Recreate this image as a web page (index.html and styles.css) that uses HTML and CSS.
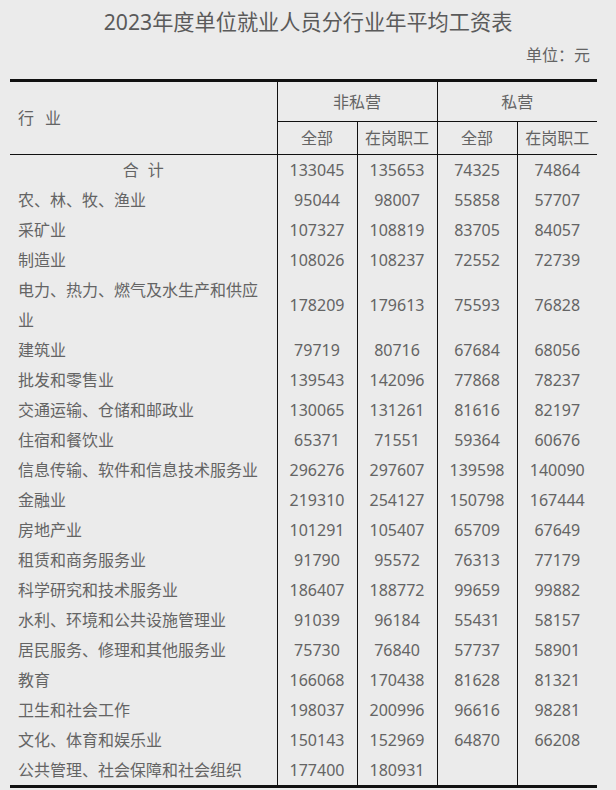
FILE: index.html
```html
<!DOCTYPE html>
<html lang="zh">
<head>
<meta charset="utf-8">
<title>2023年度单位就业人员分行业年平均工资表</title>
<link rel="stylesheet" href="styles.css">
</head>
<body>
<div class="page">
  <h1 class="title">2023年度单位就业人员分行业年平均工资表</h1>
  <div class="unit">单位：元</div>
  <table class="wage">
    <colgroup>
      <col class="c-ind"><col class="c-num"><col class="c-num"><col class="c-num"><col class="c-num">
    </colgroup>
    <thead>
      <tr class="h1">
        <th rowspan="2" class="ind-head">行业</th>
        <th colspan="2" class="grp vl">非私营</th>
        <th colspan="2" class="grp vl">私营</th>
      </tr>
      <tr class="h2">
        <th class="vl">全部</th>
        <th class="vl">在岗职工</th>
        <th class="vl">全部</th>
        <th class="vl">在岗职工</th>
      </tr>
    </thead>
    <tbody>
      <tr><td class="ind total">合计</td><td>133045</td><td>135653</td><td>74325</td><td>74864</td></tr>
      <tr><td class="ind">农、林、牧、渔业</td><td>95044</td><td>98007</td><td>55858</td><td>57707</td></tr>
      <tr><td class="ind">采矿业</td><td>107327</td><td>108819</td><td>83705</td><td>84057</td></tr>
      <tr><td class="ind">制造业</td><td>108026</td><td>108237</td><td>72552</td><td>72739</td></tr>
      <tr><td class="ind">电力、热力、燃气及水生产和供应业</td><td>178209</td><td>179613</td><td>75593</td><td>76828</td></tr>
      <tr><td class="ind">建筑业</td><td>79719</td><td>80716</td><td>67684</td><td>68056</td></tr>
      <tr><td class="ind">批发和零售业</td><td>139543</td><td>142096</td><td>77868</td><td>78237</td></tr>
      <tr><td class="ind">交通运输、仓储和邮政业</td><td>130065</td><td>131261</td><td>81616</td><td>82197</td></tr>
      <tr><td class="ind">住宿和餐饮业</td><td>65371</td><td>71551</td><td>59364</td><td>60676</td></tr>
      <tr><td class="ind">信息传输、软件和信息技术服务业</td><td>296276</td><td>297607</td><td>139598</td><td>140090</td></tr>
      <tr><td class="ind">金融业</td><td>219310</td><td>254127</td><td>150798</td><td>167444</td></tr>
      <tr><td class="ind">房地产业</td><td>101291</td><td>105407</td><td>65709</td><td>67649</td></tr>
      <tr><td class="ind">租赁和商务服务业</td><td>91790</td><td>95572</td><td>76313</td><td>77179</td></tr>
      <tr><td class="ind">科学研究和技术服务业</td><td>186407</td><td>188772</td><td>99659</td><td>99882</td></tr>
      <tr><td class="ind">水利、环境和公共设施管理业</td><td>91039</td><td>96184</td><td>55431</td><td>58157</td></tr>
      <tr><td class="ind">居民服务、修理和其他服务业</td><td>75730</td><td>76840</td><td>57737</td><td>58901</td></tr>
      <tr><td class="ind">教育</td><td>166068</td><td>170438</td><td>81628</td><td>81321</td></tr>
      <tr><td class="ind">卫生和社会工作</td><td>198037</td><td>200996</td><td>96616</td><td>98281</td></tr>
      <tr><td class="ind">文化、体育和娱乐业</td><td>150143</td><td>152969</td><td>64870</td><td>66208</td></tr>
      <tr><td class="ind">公共管理、社会保障和社会组织</td><td>177400</td><td>180931</td><td></td><td></td></tr>
    </tbody>
  </table>
</div>
</body>
</html>
```
FILE: styles.css
```css
html, body {
  margin: 0;
  padding: 0;
  background: #ebebeb;
}
body {
  font-family: "Noto Sans", "Noto Sans CJK SC", sans-serif;
  color: #646464;
}
.page {
  width: 616px;
  padding-top: 8px;
}
.title {
  margin: 0;
  font-size: 21.2px;
  font-weight: normal;
  line-height: 28px;
  text-align: center;
  color: #5a5a5a;
}
.unit {
  margin-top: 8px;
  font-size: 16px;
  line-height: 22px;
  text-align: right;
  padding-right: 26px;
}
.wage {
  margin: 13px 0 0 10px;
  width: 587px;
  border-collapse: collapse;
  table-layout: fixed;
  font-size: 16px;
  border-top: 3px solid #111;
  border-bottom: 3px solid #111;
}
.c-ind { width: 267px; }
.c-num { width: 80px; }
.wage th, .wage td {
  padding: 0;
  font-weight: normal;
  text-align: center;
  line-height: 30px;
}
.wage .vl, .wage td + td {
  border-left: 1px solid #111;
}
.h1 th { height: 39px; }
.h1 .grp { border-bottom: 1px solid #111; }
.h2 th { height: 32px; border-bottom: 1px solid #111; }
.ind-head {
  text-align: left !important;
  padding-left: 8px !important;
  letter-spacing: 11px;
  border-bottom: 1px solid #111;
}
.wage td.ind {
  text-align: left;
  padding-left: 8px;
  padding-right: 6px;
}
.wage td.total {
  text-align: center;
  letter-spacing: 9px;
  padding-left: 9px;
  padding-right: 0;
}
.wage td {
  height: 30px;
  vertical-align: middle;
}
```
